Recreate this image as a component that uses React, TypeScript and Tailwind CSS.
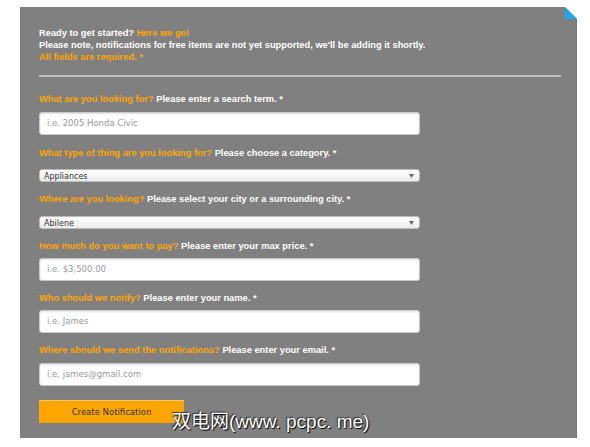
import React from 'react';

const labelFont = { fontFamily: '"Liberation Sans", Arial, sans-serif' };

const Label = ({ ask, hint }: { ask: string; hint: string }) => (
  <div className="h-[12px] text-[9.3px] leading-[12px] font-bold whitespace-nowrap">
    <span className="text-[#ffa500]">{ask}</span> <span className="text-white">{hint} *</span>
  </div>
);

const TextField = ({ placeholder, className }: { placeholder: string; className?: string }) => (
  <div
    className={`w-[381px] h-[23px] bg-white rounded-[3px] border border-[#c9c9c9] shadow-[inset_0_1px_2px_rgba(0,0,0,0.12)] flex items-center px-[7px] text-[8.5px] text-[#9a9a9a] ${className ?? ''}`}
    style={{ fontFamily: '"DejaVu Sans", sans-serif' }}
  >
    {placeholder}
  </div>
);

const SelectField = ({ value, className }: { value: string; className?: string }) => (
  <div
    className={`w-[381px] h-[13px] rounded-[3px] border border-[#bdbdbd] bg-gradient-to-b from-white to-[#ececec] flex items-center justify-between pl-[4px] pr-[5px] text-[8px] text-[#333] ${className ?? ''}`}
    style={{ fontFamily: '"DejaVu Sans", sans-serif' }}
  >
    <span className="leading-none mt-[2px]">{value}</span>
    <svg width="5" height="4" viewBox="0 0 5 4">
      <path d="M0 0 L5 0 L2.5 4 Z" fill="#666" />
    </svg>
  </div>
);

export default function App() {
  return (
    <div className="w-[590px] h-[447px] bg-white overflow-hidden pt-[7px] pl-[20px]" style={labelFont}>
      <div className="relative w-[557px] h-[431px] bg-[#808080] border-l border-r border-[#7a7a7a] pl-[18px] pt-[20px]">
        {/* corner fold */}
        <svg className="absolute right-[-1px] top-0" width="12" height="12" viewBox="0 0 12 12">
          <path d="M0 0 L12 12 L12 0 Z" fill="#ffffff" />
          <path d="M0 0 L12 12 L0 12 Z" fill="#1ea7f0" />
        </svg>

        <div className="text-[9.3px] leading-[12px] font-bold whitespace-nowrap">
          <div className="text-white">
            Ready to get started? <span className="text-[#ffa500]">Here we go!</span>
          </div>
          <div className="text-white">
            Please note, notifications for free items are not yet supported, we'll be adding it shortly.
          </div>
          <div className="text-[#ffa500]">All fields are required. *</div>
        </div>

        <div className="mt-[12px] w-[522px] h-[2px] bg-[#c4c4c4]" />

        <div className="mt-[16px]">
          <Label ask="What are you looking for?" hint="Please enter a search term." />
          <TextField className="mt-[7px]" placeholder="i.e. 2005 Honda Civic" />

          <div className="mt-[12px]">
            <Label ask="What type of thing are you looking for?" hint="Please choose a category." />
          </div>
          <SelectField className="mt-[10px]" value="Appliances" />

          <div className="mt-[11px]">
            <Label ask="Where are you looking?" hint="Please select your city or a surrounding city." />
          </div>
          <SelectField className="mt-[11px]" value="Abilene" />

          <div className="mt-[11px]">
            <Label ask="How much do you want to pay?" hint="Please enter your max price." />
          </div>
          <TextField className="mt-[6px]" placeholder="i.e. $3,500.00" />

          <div className="mt-[11px]">
            <Label ask="Who should we notify?" hint="Please enter your name." />
          </div>
          <TextField className="mt-[6px]" placeholder="i.e. James" />

          <div className="mt-[11px]">
            <Label ask="Where should we send the notifications?" hint="Please enter your email." />
          </div>
          <TextField className="mt-[7px]" placeholder="i.e. james@gmail.com" />

          <button
            className="mt-[14px] w-[145px] h-[23px] bg-[#ffa500] border-t border-[#ffc866] text-[8.5px] text-[#333] flex items-center justify-center"
            style={{ fontFamily: '"DejaVu Sans", sans-serif' }}
          >
            Create Notification
          </button>
        </div>

        {/* watermark */}
        <div
          className="absolute left-[151px] top-[403px] text-[19px] leading-[24px] text-white whitespace-nowrap [text-shadow:1px_1px_1px_#000,-1px_-1px_1px_#333]"
          style={{ fontFamily: '"Liberation Sans", "Noto Sans CJK SC", sans-serif' }}
        >
          双电网(www. pcpc. me)
        </div>
      </div>
    </div>
  );
}
